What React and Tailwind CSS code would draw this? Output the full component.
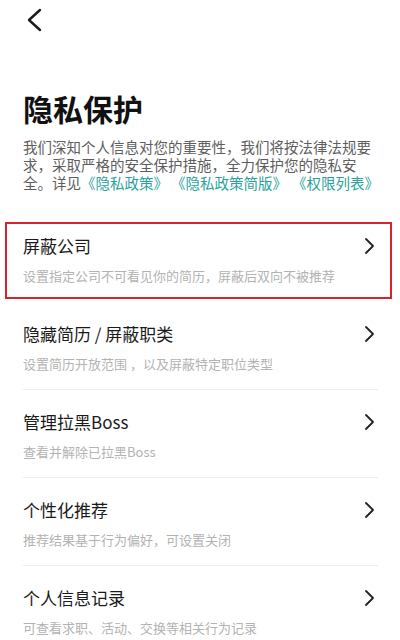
import React from "react";

const items = [
  { t: "屏蔽公司", s: "设置指定公司不可看见你的简历，屏蔽后双向不被推荐", hl: true },
  { t: "隐藏简历 / 屏蔽职类", s: "设置简历开放范围 ，以及屏蔽特定职位类型" },
  { t: "管理拉黑Boss", s: "查看并解除已拉黑Boss" },
  { t: "个性化推荐", s: "推荐结果基于行为偏好，可设置关闭" },
  { t: "个人信息记录", s: "可查看求职、活动、交换等相关行为记录" },
];

function Chevron() {
  return (
    <svg width="12" height="18" viewBox="0 0 12 18" className="shrink-0">
      <polyline points="3,2 10,9 3,16" fill="none" stroke="#222" strokeWidth="1.8" strokeLinecap="round" strokeLinejoin="round" />
    </svg>
  );
}

export default function App() {
  return (
    <div
      className="w-[400px] h-[640px] overflow-hidden bg-white"
      style={{ fontFamily: '"Noto Sans CJK SC", "Noto Sans", sans-serif' }}
    >
      <div className="h-[40px] flex items-center pl-[24px]">
        <svg width="22" height="26" viewBox="0 0 22 26">
          <polyline points="16,3 5,13 16,23" fill="none" stroke="#1a1a1a" strokeWidth="2.4" strokeLinecap="round" strokeLinejoin="round" />
        </svg>
      </div>
      <div className="px-[23px]">
        <h1 className="mt-[48px] text-[30px] leading-[40px] font-bold text-[#111]">隐私保护</h1>
        <div className="mt-[10px] text-[14.5px] leading-[18px] text-[#5e5e5e] whitespace-nowrap">
          <div>我们深知个人信息对您的重要性，我们将按法律法规要</div>
          <div>求，采取严格的安全保护措施，全力保护您的隐私安</div>
          <div className="flex">
            <span>全。详见</span>
            <span className="text-[#2ba39c]">《隐私政策》</span>
            <span className="ml-[3px] text-[#2ba39c]">《隐私政策简版》</span>
            <span className="ml-[5px] text-[#2ba39c]">《权限列表》</span>
          </div>
        </div>
        <div className="mt-[22px] mr-[-1px]">
          {items.map((it, i) => (
            <div
              key={i}
              className={`relative pt-[20px] ${it.hl ? "pb-[17px]" : "pb-[16px] border-b border-[#eeeeee]"}`}
            >
              <div className="flex items-center justify-between pr-[3px]">
                <div className="text-[17px] leading-[24px] text-[#1a1a1a]">{it.t}</div>
                <Chevron />
              </div>
              <div className="mt-[9px] text-[13px] leading-[18px] text-[#b3b3b3] whitespace-nowrap">{it.s}</div>
              {it.hl && (
                <div className="absolute left-[-18px] right-[-14px] top-[8px] h-[77px] border-[2.5px] border-[#d8222c] pointer-events-none" />
              )}
            </div>
          ))}
        </div>
      </div>
    </div>
  );
}
